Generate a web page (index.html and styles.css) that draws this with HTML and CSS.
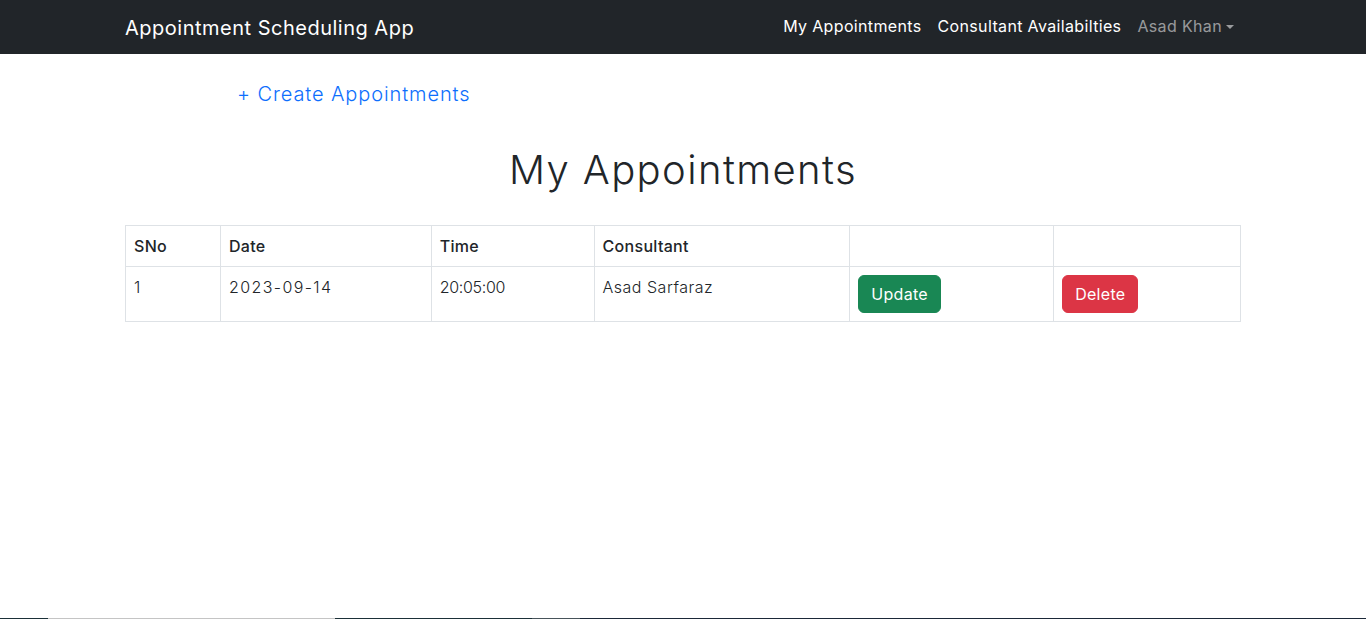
FILE: index.html
```html
<!DOCTYPE html>
<html lang="en">
<head>
<meta charset="utf-8">
<title>Appointment Scheduling App</title>
<link rel="stylesheet" href="styles.css">
</head>
<body>
<nav class="navbar">
  <div class="container nav-inner">
    <a class="brand" href="#">Appointment Scheduling App</a>
    <ul class="nav-links">
      <li><a class="nav-link active" href="#">My Appointments</a></li>
      <li><a class="nav-link active" href="#">Consultant Availabilties</a></li>
      <li><a class="nav-link muted" href="#">Asad Khan<span class="caret"></span></a></li>
    </ul>
  </div>
</nav>
<main class="container main">
  <div class="create-row"><a class="create-link" href="#">+ Create Appointments</a></div>
  <h1 class="title">My Appointments</h1>
  <table class="table">
    <thead>
      <tr>
        <th class="c1">SNo</th>
        <th class="c2">Date</th>
        <th class="c3">Time</th>
        <th class="c4">Consultant</th>
        <th class="c5"></th>
        <th class="c6"></th>
      </tr>
    </thead>
    <tbody>
      <tr>
        <td>1</td>
        <td class="date">2023-09-14</td>
        <td class="time">20:05:00</td>
        <td>Asad Sarfaraz</td>
        <td><button class="btn btn-success">Update</button></td>
        <td><button class="btn btn-danger">Delete</button></td>
      </tr>
    </tbody>
  </table>
</main>
<div class="footer-line"><span class="seg s1"></span><span class="seg s2"></span><span class="seg s3"></span><span class="seg s4"></span><span class="seg s5"></span></div>
</body>
</html>
```
FILE: styles.css
```css
* { box-sizing: border-box; }
html, body { height: 100%; }
body {
  margin: 0;
  font-family: Inter, "Noto Sans", sans-serif;
  font-size: 16px;
  line-height: 1.5;
  color: #212529;
  background: #fff;
  display: flex;
  flex-direction: column;
}
a { text-decoration: none; }
.container {
  width: 1140px;
  margin: 0 auto;
  padding: 0 12px;
}
.navbar {
  background: #212529;
  height: 54px;
  flex-shrink: 0;
}
.nav-inner {
  height: 100%;
  display: flex;
  align-items: center;
  justify-content: space-between;
}
.brand {
  color: #fff;
  font-size: 20px;
  font-weight: 400;
  letter-spacing: 0.5px;
  line-height: 30px;
  margin-top: 1px;
}
.nav-links {
  list-style: none;
  margin: 0;
  padding: 0;
  display: flex;
  margin-right: -1px;
}
.nav-link {
  display: flex;
  align-items: center;
  padding: 8px 8px;
  font-size: 16px;
  line-height: 24px;
  letter-spacing: 0.35px;
  margin-top: -2px;
}
.nav-link.active { color: #fff; }
.nav-link.muted { color: rgba(255,255,255,0.55); }
.caret {
  display: inline-block;
  margin-left: 4px;
  border-top: 4px solid rgba(255,255,255,0.55);
  border-left: 4px solid transparent;
  border-right: 4px solid transparent;
  margin-top: 1px;
}
.main { flex: 1; }
.create-row {
  padding-left: 112px;
  padding-top: 25px;
}
.create-link {
  color: #0d6efd;
  font-size: 20px;
  font-weight: 300;
  line-height: 30px;
  letter-spacing: 0.9px;
}
.title {
  text-align: center;
  font-size: 40px;
  font-weight: 300;
  line-height: 48px;
  letter-spacing: 1.4px;
  margin: 37px 0 31px;
}
.table {
  width: 100%;
  border-collapse: collapse;
  border: 1px solid #dee2e6;
  vertical-align: top;
}
.table th, .table td {
  border: 1px solid #dee2e6;
  padding: 8px;
  text-align: left;
  font-size: 16px;
  line-height: 24px;
}
.table th { font-weight: 500; letter-spacing: 0.3px; }
.table td { font-weight: 300; vertical-align: top; letter-spacing: 0.5px; }
.table td.date { letter-spacing: 1.4px; }
.table td.time { letter-spacing: -0.3px; }
.c1 { width: 95px; }
.c2 { width: 211px; }
.c3 { width: 163px; }
.c4 { width: 256px; }
.c5 { width: 204px; }
.c6 { width: 187px; }
.btn {
  font-family: inherit;
  font-size: 16px;
  font-weight: 400;
  line-height: 24px;
  letter-spacing: 0.3px;
  padding: 6px 12px;
  border: 1px solid transparent;
  border-radius: 6px;
  color: #fff;
  cursor: pointer;
}
.btn-success { background: #198754; border-color: #198754; }
.btn-danger { background: #dc3545; border-color: #dc3545; }
.footer-line {
  height: 1px;
  display: flex;
  flex-shrink: 0;
}
.seg { height: 1px; display: block; }
.s1 { width: 48px; background: #1b3038; }
.s2 { width: 287px; background: #c4c4c4; }
.s3 { width: 197px; background: #1b3038; }
.s4 { width: 48px; background: #48545a; }
.s5 { flex: 1; background: #1b2838; }
```
